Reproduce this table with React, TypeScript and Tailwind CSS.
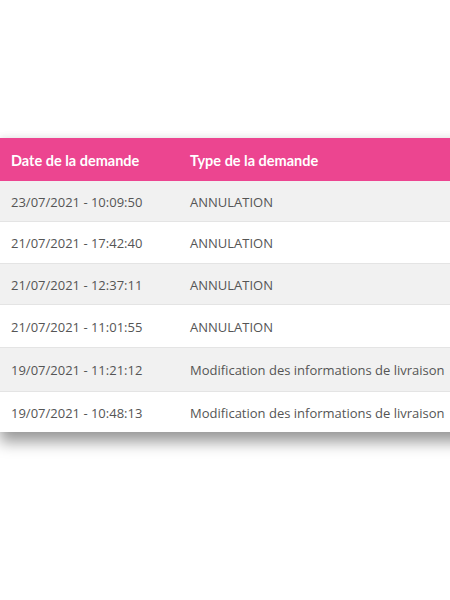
import React from "react";

type Demande = {
  date: string;
  type: string;
  h: string;
};

const demandes: Demande[] = [
  { date: "23/07/2021 - 10:09:50", type: "ANNULATION", h: "h-[41px]" },
  { date: "21/07/2021 - 17:42:40", type: "ANNULATION", h: "h-[42px]" },
  { date: "21/07/2021 - 12:37:11", type: "ANNULATION", h: "h-[41px]" },
  { date: "21/07/2021 - 11:01:55", type: "ANNULATION", h: "h-[43px]" },
  { date: "19/07/2021 - 11:21:12", type: "Modification des informations de livraison", h: "h-[44px]" },
  { date: "19/07/2021 - 10:48:13", type: "Modification des informations de livraison", h: "h-[40px]" },
];

export default function App() {
  return (
    <div className="w-[450px] h-[600px] bg-white overflow-hidden pt-[138px]">
      <div className="w-[470px] shadow-[0_10px_14px_rgba(0,0,0,0.4),0_-2px_6px_rgba(0,0,0,0.06)]">
        {/* header */}
        <div className="h-[43px] pt-[3px] flex items-center bg-[#ec4590] text-white font-bold text-[14.5px] font-['Lato',sans-serif]">
          <div className="w-[190px] pl-[11px]">Date de la demande</div>
          <div>Type de la demande</div>
        </div>

        {demandes.map((d, i) => (
          <div
            key={i}
            className={`${d.h} pt-[3px] flex items-center text-[13px] text-[#555] font-['Open_Sans',sans-serif] border-b border-[#e4e4e4] last:border-b-0 ${
              i % 2 === 0 ? "bg-[#f1f1f1]" : "bg-white"
            }`}
          >
            <div className="w-[190px] pl-[11px]">{d.date}</div>
            <div className="whitespace-nowrap">{d.type}</div>
          </div>
        ))}
      </div>
    </div>
  );
}
